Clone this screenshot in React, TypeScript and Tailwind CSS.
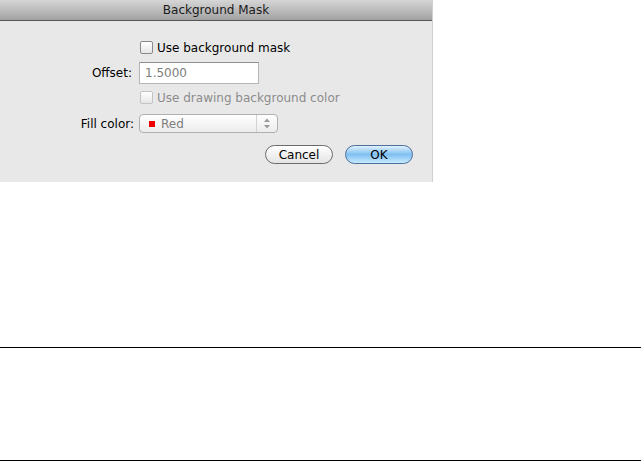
import React from 'react';

const font = { fontFamily: '"DejaVu Sans", "Liberation Sans", sans-serif' };

const Checkbox = ({ disabled }: { disabled?: boolean }) => (
  <span
    className={`inline-block w-[13px] h-[13px] rounded-[2px] border bg-gradient-to-b from-white to-[#e6e6e6] ${
      disabled ? 'border-[#c4c4c4]' : 'border-[#8a8a8a]'
    }`}
  />
);

const App = () => {
  return (
    <div className="w-[641px] h-[461px] bg-white flex flex-col text-[12px]" style={font}>
      {/* Dialog */}
      <div className="w-[433px] h-[182px] flex flex-col bg-[#e8e8e8] border-r border-[#cfcfcf]">
        {/* Title bar */}
        <div className="h-[21px] shrink-0 flex items-center justify-center bg-gradient-to-b from-[#d6d6d6] to-[#a2a2a2] border-b border-[#555555] text-[#1a1a1a]">
          Background Mask
        </div>

        {/* Body */}
        <div className="flex flex-col pt-[20px]">
          <div className="flex items-center h-[13px] pl-[140px] gap-[4px]">
            <Checkbox />
            <span className="text-black">Use background mask</span>
          </div>

          <div className="flex items-center mt-[8px] h-[22px]">
            <span className="w-[132px] text-right text-black">Offset:</span>
            <div className="ml-[7px] w-[120px] h-[22px] bg-white border border-[#b5b5b5] border-t-[#8f8f8f] flex items-center pl-[5px] text-[#7d7d7d]">
              1.5000
            </div>
          </div>

          <div className="flex items-center h-[13px] mt-[7px] pl-[140px] gap-[4px]">
            <Checkbox disabled />
            <span className="text-[#8c8c8c]">Use drawing background color</span>
          </div>

          <div className="flex items-center mt-[10px] h-[19px]">
            <span className="w-[134px] text-right text-black">Fill color:</span>
            <div className="ml-[5px] w-[139px] h-[19px] rounded-[4px] border border-[#b0b0b0] bg-gradient-to-b from-white to-[#ececec] flex items-center">
              <span className="ml-[9px] w-[6px] h-[6px] bg-[#ee0000]" />
              <span className="ml-[6px] text-[#7d7d7d] flex-1">Red</span>
              <span className="w-px h-[17px] bg-[#d2d2d2]" />
              <svg width="20" height="17" viewBox="0 0 20 17">
                <path d="M7 7 L10 3.5 L13 7 Z" fill="#9a9a9a" />
                <path d="M7 10 L10 13.5 L13 10 Z" fill="#9a9a9a" />
              </svg>
            </div>
          </div>

          <div className="flex justify-end gap-[12px] mt-[12px] pr-[19px]">
            <button className="w-[68px] h-[19px] rounded-full border border-[#6b6b6b] bg-gradient-to-b from-white to-[#e4e4e4] text-black leading-none">
              Cancel
            </button>
            <button className="w-[68px] h-[19px] rounded-full border border-[#4d6f9c] bg-gradient-to-b from-[#e0f1fd] via-[#7fc0f2] to-[#c8eafe] text-black leading-none">
              OK
            </button>
          </div>
        </div>
      </div>

      <div className="h-[165px] shrink-0" />
      <div className="h-px bg-black shrink-0" />
      <div className="h-[112px] shrink-0" />
      <div className="h-px bg-black shrink-0" />
    </div>
  );
};

export default App;
